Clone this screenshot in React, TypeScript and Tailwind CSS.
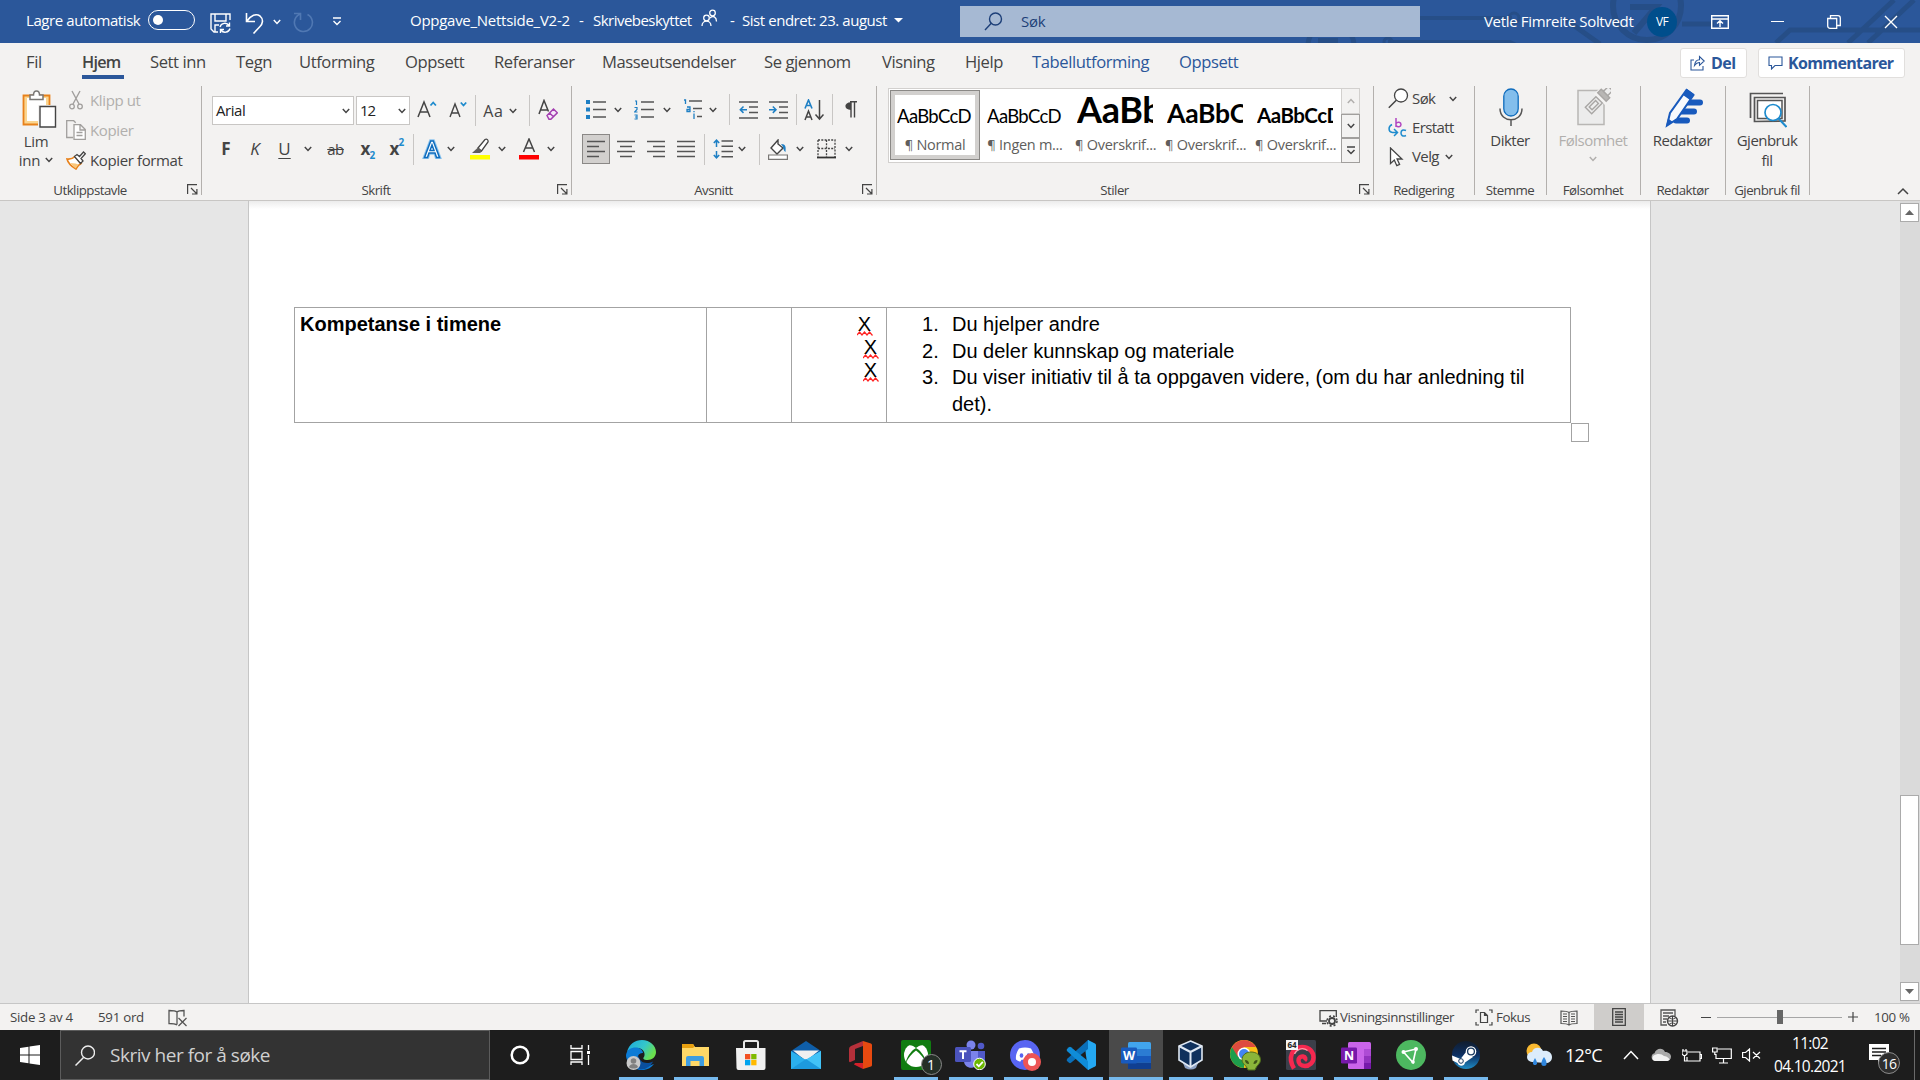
import React from "react";

type P = { children?: React.ReactNode; className?: string };

const Chev = ({ c = "#444444" }: { c?: string }) => (
  <svg width="8" height="6" viewBox="0 0 8 6" className="shrink-0" fill="none" stroke={c} strokeWidth="1.5">
    <path d="M.8 1 4 4.4 7.2 1" />
  </svg>
);

const Slot = ({ children, className = "" }: P) => (
  <div className={`flex shrink-0 items-center justify-center ${className}`}>{children}</div>
);

const Sep = ({ className = "" }: P) => <div className={`h-[31px] w-px shrink-0 bg-[#c8c6c4] ${className}`} />;

const Svg = ({ w, h, children, className = "", vb }: { w: number; h: number; vb?: string } & P) => (
  <svg width={w} height={h} viewBox={vb ?? `0 0 ${w} ${h}`} className={`shrink-0 ${className}`} fill="none">
    {children}
  </svg>
);

const Launcher = () => (
  <Svg w={11} h={11} className="absolute right-[4px] bottom-[5px]">
    <path d="M.6 10V.6H10M4 4l5.500 5.500M9.900 5v5H5" stroke="#444" strokeWidth="1.2" />
  </Svg>
);

const Group = ({ label, className = "", launcher, children }: P & { label: string; launcher?: boolean }) => (
  <div className={`relative flex h-full shrink-0 flex-col ${className}`}>
    <div className="h-[99px]">{children}</div>
    <div className={`text-center text-[13.3px] leading-[19px] tracking-[-0.04em] whitespace-nowrap ${launcher ? "pr-[22px]" : "pr-[2px]"}`}>{label}</div>
    {launcher && <Launcher />}
    <div className="absolute top-[4px] right-0 h-[109px] w-px bg-[#b3b0ad]" />
  </div>
);

/* ---------- title bar ---------- */

const Circuit = () => (
  <svg className="absolute top-0 right-0" width="640" height="43" viewBox="1280 0 640 43" fill="none" stroke="#264e87">
    <path d="M1308 46a22 22 0 0 1 46 0" strokeWidth="5" />
    <path d="M1318 38h20v5h-20z" fill="#264e87" stroke="none" />
    <path d="M1388 42h122l8 4M1420 18h92" strokeWidth="4" />
    <circle cx="1388" cy="42" r="4" strokeWidth="3" />
    <circle cx="1514" cy="18" r="5" strokeWidth="3" />
    <circle cx="1647" cy="6" r="34" strokeWidth="6" />
    <path d="M1630 7h26l-22 26M1656 7v24" strokeWidth="6" />
    <path d="M1566 20l34 24M1682 24h32" strokeWidth="5" />
    <path d="M1776 43l14-13h130M1848 43l46-43M1868 43l46-43" strokeWidth="5" />
  </svg>
);

const TitleBar = () => (
  <header className="relative flex h-[43px] shrink-0 items-center overflow-hidden bg-[#2b579a] text-[15px] tracking-[-0.04em] whitespace-nowrap text-white">
    <Circuit />
    <div className="relative flex h-full w-[385px] items-center">
      <span className="ml-[26px] w-[122px] pb-[2px] tracking-[-0.028em]">Lagre automatisk</span>
      <div className="mb-[3px] flex h-[20px] w-[47px] items-center rounded-full border-[1.5px] border-white pl-[4px]">
        <div className="size-[10px] rounded-full bg-white" />
      </div>
      <Slot className="ml-[14px] w-[22px] pt-[3px]">
        <Svg w={21} h={21}>
          <path d="M20 7V1H1v15l3 3h4M5 1v7h11V1M5 19v-7h4" stroke="#fff" strokeWidth="1.4" />
          <path d="M10 14a5 5 0 0 1 9-1.500M19.500 9.500v3.500H16M20 15.500a5 5 0 0 1-9 1.500M10.500 20v-3.500H14" stroke="#fff" strokeWidth="1.4" />
        </Svg>
      </Slot>
      <Slot className="ml-[13px] w-[22px] pt-[2px]">
        <Svg w={20} h={22}>
          <path d="M1.500 1v8.500H10M2 9C6 3.500 11 1 15 4c4 3.500 2.500 8 0 10.500L8.500 21.500" stroke="#fff" strokeWidth="1.6" />
        </Svg>
      </Slot>
      <Slot className="ml-[6px] w-[10px]"><Chev c="#fff" /></Slot>
      <Slot className="ml-[10px] w-[22px] pt-[1px]">
        <Svg w={21} h={21}>
          <path d="M1 1.500h6.500V8M7.500 2A9 9 0 1 0 14.500 2.500" stroke="#5078b3" strokeWidth="1.6" />
        </Svg>
      </Slot>
      <Slot className="ml-[17px] w-[12px]">
        <Svg w={10} h={9}>
          <path d="M1 1h8M1.500 4 5 7.500 8.500 4" stroke="#fff" strokeWidth="1.4" />
        </Svg>
      </Slot>
    </div>
    <div className="relative flex h-full w-[575px] items-center pb-[2px]">
      <span className="ml-[25px] w-[169px] tracking-[-0.018em]">Oppgave_Nettside_V2-2</span>
      <span className="w-[14px]">-</span>
      <span className="w-[108px] tracking-[-0.035em]">Skrivebeskyttet</span>
      <Svg w={17} h={18} className="mb-[6px]">
        <g stroke="#fff" strokeWidth="1.3">
          <circle cx="5.500" cy="9" r="2.800" />
          <path d="M1 17c0-6.500 9-6.500 9 0" />
          <circle cx="11.500" cy="4" r="2.800" />
          <path d="M9 9c3-3 6.500-1 6.500 3.500" />
        </g>
      </Svg>
      <span className="ml-[12px] w-[12px]">-</span>
      <span className="w-[151px] tracking-[-0.03em]">Sist endret: 23. august</span>
      <Svg w={9} h={5} className="ml-px"><path d="M0 0h9L4.500 4.500z" fill="#fff" /></Svg>
    </div>
    <div className="relative mb-px flex h-[31px] w-[460px] items-center bg-[#a6b9d3] text-[#1d3f78]">
      <Svg w={19} h={19} className="ml-[24px]">
        <circle cx="11.500" cy="7" r="6" stroke="#1d3f78" strokeWidth="1.4" />
        <path d="M7.500 11 1 18" stroke="#1d3f78" strokeWidth="1.4" />
      </Svg>
      <span className="ml-[18px] tracking-[-0.02em]">Søk</span>
    </div>
    <div className="relative flex h-full flex-1 items-center">
      <span className="ml-[64px] w-[163px] tracking-[-0.022em]">Vetle Fimreite Soltvedt</span>
      <div className="flex size-[30px] items-center justify-center rounded-full bg-[#004e8c] text-[12px]">VF</div>
      <Svg w={18} h={14} className="ml-[34px]">
        <path d="M.7.700h16.600v12.600H.7zM.7 4h16.600M9 12V6M6 8.500 9 5.700l3 2.800" stroke="#fff" strokeWidth="1.400" />
      </Svg>
      <div className="ml-[42px] h-[1.500px] w-[13px] bg-white" />
      <Svg w={14} h={14} className="ml-[43px]">
        <path d="M.7 3.500h9v9.800H3a2.300 2.300 0 0 1-2.300-2.300zM3.500 3.500V.700H11A2.300 2.300 0 0 1 13.300 3v7.500H10" stroke="#fff" strokeWidth="1.300" />
      </Svg>
      <Svg w={14} h={14} className="ml-[43px]"><path d="m1 1 12 12M13 1 1 13" stroke="#fff" strokeWidth="1.400" /></Svg>
    </div>
  </header>
);

/* ---------- tabs ---------- */

const tabs: [string, string][] = [
  ["Sett inn", "w-[86px]"],
  ["Tegn", "w-[63px]"],
  ["Utforming", "w-[106px]"],
  ["Oppsett", "w-[89px]"],
  ["Referanser", "w-[108px]"],
  ["Masseutsendelser", "w-[162px]"],
  ["Se gjennom", "w-[118px]"],
  ["Visning", "w-[83px]"],
  ["Hjelp", "w-[67px]"],
];

const Tabs = () => (
  <nav className="flex h-[39px] shrink-0 items-center pl-[26px] text-[16.600px] tracking-[-0.025em] whitespace-nowrap">
    <span className="w-[56px]">Fil</span>
    <div className="w-[68px]">
      <div className="flex h-[39px] w-[42px] flex-col">
        <span className="h-[32px] pt-[7px] text-[16.200px] leading-[25px] font-semibold tracking-[-0.045em]">Hjem</span>
        <div className="h-[4px] bg-[#2b579a]" />
      </div>
    </div>
    {tabs.map(([t, w]) => (
      <span key={t} className={w}>{t}</span>
    ))}
    <span className="w-[147px] text-[#2b579a]">Tabellutforming</span>
    <span className="text-[#2b579a]">Oppsett</span>
    <div className="mr-[15px] ml-auto flex gap-[11px] font-bold text-[#2b579a]">
      <div className="flex h-[30px] w-[67px] items-center rounded-[3px] border border-[#e1dfdd] bg-white pl-[9px]">
        <Svg w={15} h={16}>
          <path d="M4 5H1v10h12v-4M4.500 10.500C5 6.500 7 4.700 9.500 4.700V1.500l4.700 4.500-4.700 4.300V7.500C7.500 7.300 6 8.500 4.500 10.500z" stroke="#2b579a" strokeWidth="1.100" />
        </Svg>
        <span className="ml-[6px] text-[16px] tracking-[-0.035em]">Del</span>
      </div>
      <div className="flex h-[30px] w-[147px] items-center rounded-[3px] border border-[#e1dfdd] bg-white pl-[9px]">
        <Svg w={15} h={14}><path d="M1 1h13v8.500H7L3.500 13V9.500H1z" stroke="#2b579a" strokeWidth="1.100" /></Svg>
        <span className="ml-[5px] text-[16px] tracking-[-0.04em]">Kommentarer</span>
      </div>
    </div>
  </nav>
);

/* ---------- ribbon groups ---------- */

const Clipboard = () => (
  <Group label="Utklippstavle" className="w-[202px]" launcher>
    <div className="flex">
      <div className="flex w-[66px] flex-col items-center pt-[8px] pl-[6px] text-[15px] leading-[20px] tracking-[-0.02em]">
        <Svg w={35} h={38} className="ml-[6px]">
          <path d="M1.500 5.500h26v29h-26z" fill="#fbd58f" stroke="#e8811a" strokeWidth="1.800" />
          <path d="M5 8h19v23H5z" fill="#fff" />
          <path d="M8 9.500V5h3.500c0-5.500 6-5.500 6 0H21v4.500z" fill="#fff" stroke="#797775" strokeWidth="1.500" />
          <path d="M16 15h18v22H16z" fill="#f3f2f1" />
          <path d="M18 16.500h15.500V37H18z" fill="#fff" stroke="#444" strokeWidth="1.400" />
        </Svg>
        <span className="mt-[3px]">Lim</span>
        <span className="-mt-px flex items-center gap-[5px]">inn <Chev /></span>
      </div>
      <div className="flex flex-col pt-[3px] text-[15px] leading-[30px] tracking-[-0.025em] whitespace-nowrap">
        <div className="flex h-[30px] items-center text-[#b1afad]">
          <Slot className="mr-[4px] w-[20px]">
            <Svg w={14} h={20}>
              <path d="M3 1l7 13M11 1 4 14" stroke="#a19f9d" strokeWidth="1.400" />
              <circle cx="3" cy="16.500" r="2.300" stroke="#a19f9d" strokeWidth="1.300" />
              <circle cx="11" cy="16.500" r="2.300" stroke="#a19f9d" strokeWidth="1.300" />
            </Svg>
          </Slot>
          Klipp ut
        </div>
        <div className="flex h-[30px] items-center text-[#b1afad]">
          <Slot className="mr-[4px] w-[20px]">
            <Svg w={20} h={20}>
              <path d="M7 17.500H.7V.700h7l2 2" stroke="#a19f9d" strokeWidth="1.300" />
              <path d="M8 4.700h6.500l4.800 4.800v9.800H8zM14 5v5h5M10.500 12.500h6M10.500 15.500h6" fill="#fff" stroke="#a19f9d" strokeWidth="1.300" />
            </Svg>
          </Slot>
          Kopier
        </div>
        <div className="flex h-[30px] items-center">
          <Slot className="mr-[4px] w-[20px]">
            <Svg w={20} h={19}>
              <path d="M1 8c4 .5 6-.5 8-2.500l6 7c-2 1-4 3-5 5.500C5.500 15.500 2 12 1 8z" fill="#fff" stroke="#e8811a" strokeWidth="1.600" />
              <path d="M4 12l5.500 5.500 3-4-3-1z" fill="#f9c77c" />
              <path d="m8.500 5.500 2.500-2 2.500 2 4-4.500 1.800 1.800-4.300 4.700 2 2.500-2.500 2.500z" fill="#fff" stroke="#444" strokeWidth="1.300" />
            </Svg>
          </Slot>
          Kopier format
        </div>
      </div>
    </div>
  </Group>
);

const Font = () => (
  <Group label="Skrift" className="w-[370px]" launcher>
    <div className="flex h-[29px] items-center pl-[10px] mt-[14px]">
      <div className="flex h-[29px] w-[142px] items-center justify-between border border-[#c8c6c4] bg-white px-[3px] text-[15px] tracking-[-0.03em] text-[#222]">Arial<Chev /></div>
      <div className="ml-[2px] flex h-[29px] w-[54px] items-center justify-between border border-[#c8c6c4] bg-white px-[3px] text-[15px] tracking-[-0.08em] text-[#222]">12<Chev /></div>
      <Slot className="w-[33px]">
        <Svg w={20} h={20} className="mb-[4px]">
          <path d="M1 18 7 3l6 15M3 13h8" stroke="#444" strokeWidth="1.500" /><path d="m13.500 6.500 2.700-3 2.700 3" stroke="#1e8bcd" strokeWidth="1.800" />
        </Svg>
      </Slot>
      <Slot className="w-[29px]">
        <Svg w={18} h={20} className="mb-[4px]">
          <path d="M1 18 6 5l5 13M2.500 14h7" stroke="#444" strokeWidth="1.400" /><path d="m11.800 3.500 2.700 3 2.700-3" stroke="#1e8bcd" strokeWidth="1.800" />
        </Svg>
      </Slot>
      <Sep className="ml-[3px]" />
      <Slot className="ml-[4px] w-[27px] text-[16px] tracking-[0.05em]">Aa</Slot>
      <Slot className="w-[11px]"><Chev /></Slot>
      <Sep className="ml-[11px]" />
      <Slot className="ml-[8px] w-[20px]">
        <Svg w={20} h={21} className="mb-[2px]">
          <path d="M1 15 6 1.500l4.500 11M2.500 11h7" stroke="#444" strokeWidth="1.500" />
          <path d="m9 16.500 6.500-6.500 3.800 3.800-6.500 6.500H11zM11.500 14l4 3.800" fill="#f6e8fa" stroke="#a33fb0" strokeWidth="1.500" />
        </Svg>
      </Slot>
    </div>
    <div className="mt-[8px] flex h-[32px] items-center pl-[10px] text-[17px]">
      <Slot className="w-[28px] font-bold">F</Slot>
      <Slot className="w-[30px] italic">K</Slot>
      <Slot className="w-[29px] underline underline-offset-[3px]">U</Slot>
      <Slot className="w-[18px]"><Chev /></Slot>
      <Slot className="w-[37px]">
        <span className="px-px text-[15px] tracking-[-0.03em] line-through">ab</span>
      </Slot>
      <Slot className="w-[27px] font-bold tracking-[-0.04em]">x<span className="mt-[13px] text-[10px] text-[#1e8bcd]">2</span></Slot>
      <Slot className="w-[31px] font-bold tracking-[-0.04em]">x<span className="mb-[13px] text-[10px] text-[#1e8bcd]">2</span></Slot>
      <Sep className="ml-px" />
      <Slot className="ml-[8px] w-[20px]">
        <Svg w={20} h={20}>
          <path d="M2.500 18.500 8.700 2h2.600l6.200 16.500h-3L13 14H7l-1.500 4.500z" fill="#fff" stroke="#8ec5ee" strokeWidth="3.500" />
          <path d="M2.500 18.500 8.700 2h2.600l6.200 16.500h-3L13 14H7l-1.500 4.500zM8 11.500h4l-2-5.500z" fill="#fff" stroke="#0f6cbd" strokeWidth="1.500" />
        </Svg>
      </Slot>
      <Slot className="ml-[3px] w-[11px]"><Chev /></Slot>
      <Slot className="ml-[14px] w-[20px]">
        <Svg w={20} h={22}>
          <path d="M0 17h20v4.500H0z" fill="#ff0" />
          <path d="M8 10 15 1.500c2-1 3.500.5 3 2.500l-6.500 9z" fill="#fff" stroke="#444" strokeWidth="1.300" /><path d="m8 9.500 4 4-2 1.500H2z" fill="#605e5c" />
        </Svg>
      </Slot>
      <Slot className="ml-[7px] w-[10px]"><Chev /></Slot>
      <Slot className="ml-[12px] w-[20px]">
        <Svg w={20} h={22}>
          <path d="M0 17h20v4.500H0z" fill="red" /><path d="M4.500 14 10 1l5.500 13M6.500 10h7" stroke="#444" strokeWidth="1.500" />
        </Svg>
      </Slot>
      <Slot className="ml-[7px] w-[10px]"><Chev /></Slot>
    </div>
  </Group>
);

const Lines = ({ rows }: { rows: [number, number][] }) => (
  <Svg w={18} h={18}>
    {rows.map(([a, b], i) => (
      <path key={i} d={`M${a} ${1.5 + i * 5}H${b}`} stroke="#555" strokeWidth="1.5" />
    ))}
  </Svg>
);

const Paragraph = () => (
  <Group label="Avsnitt" className="w-[305px]" launcher>
    <div className="mt-[12px] flex h-[31px] items-center pl-[14px]">
      <Slot className="w-[20px]">
        <Svg w={20} h={20}>
          <path d="M0 0h4v4H0zM0 7.500h4v4H0zM0 15h4v4H0z" fill="#1e7fc4" /><path d="M7 2h13M7 9.500h13M7 17h13" stroke="#555" strokeWidth="1.500" />
        </Svg>
      </Slot>
      <Slot className="ml-[7px] w-[10px]"><Chev /></Slot>
      <Slot className="ml-[11px] w-[20px]">
        <Svg w={20} h={20}>
          <path d="M7 2h13M7 9.500h13M7 17h13" stroke="#555" strokeWidth="1.500" />
          <path d="M1 1h1.500v4M.5 7.500h2.500v2L.5 12h3M.5 15h2.500v4H.5M1 17h2" stroke="#1e7fc4" strokeWidth="1.200" />
        </Svg>
      </Slot>
      <Slot className="ml-[8px] w-[10px]"><Chev /></Slot>
      <Slot className="ml-[11px] w-[20px]">
        <Svg w={20} h={21}>
          <path d="M6 2h13M10 9.500h9M14 17.500h5" stroke="#555" strokeWidth="1.500" />
          <path d="M1 1h1.500v4M4 8h3v4.500H4v-2h3M11 14.500V20M11 12v1.300" stroke="#1e7fc4" strokeWidth="1.300" />
        </Svg>
      </Slot>
      <Slot className="ml-[5px] w-[10px]"><Chev /></Slot>
      <Sep className="ml-[11px]" />
      <Slot className="ml-[8px] w-[20px]">
        <Svg w={19} h={20}>
          <path d="M0 2h19M10 7h9M10 12.500h9M0 18h19" stroke="#555" strokeWidth="1.500" /><path d="M8 9.700H1.500M4.500 6.500 1.300 9.700l3.200 3.200" stroke="#1e7fc4" strokeWidth="1.500" />
        </Svg>
      </Slot>
      <Slot className="ml-[10px] w-[20px]">
        <Svg w={19} h={20}>
          <path d="M0 2h19M10 7h9M10 12.500h9M0 18h19" stroke="#555" strokeWidth="1.500" /><path d="M0 9.700h6.500M3.800 6.500 7 9.700l-3.200 3.200" stroke="#1e7fc4" strokeWidth="1.500" />
        </Svg>
      </Slot>
      <Sep className="ml-[8px]" />
      <Slot className="ml-[7px] w-[20px]">
        <Svg w={20} h={22}>
          <path d="M1 9.500 4.500 1 8 9.500M2.300 6.500h4.400" stroke="#1e7fc4" strokeWidth="1.600" />
          <path d="M1 21l3.500-9L8 21M2.300 18h4.400M15.500 1v19M11.500 15.500l4 4.500 4-4.500" stroke="#444" strokeWidth="1.500" />
        </Svg>
      </Slot>
      <Sep className="ml-[8px]" />
      <Slot className="ml-[12px] w-[12px]">
        <Svg w={12} h={17}>
          <path d="M6 1.200C-1.500 1.200-1.500 9 6 9z" fill="#444" /><path d="M5 .8h7M6 1v15.500M9.500 1v15.500" stroke="#444" strokeWidth="1.400" />
        </Svg>
      </Slot>
    </div>
    <div className="mt-[8px] flex h-[32px] items-center pl-[10px]">
      <Slot className="h-[30px] w-[28px] border border-[#8a8886] bg-[#d2d0ce]"><Lines rows={[[0, 18], [0, 12], [0, 18], [0, 12]]} /></Slot>
      <Slot className="ml-[6px] w-[20px]"><Lines rows={[[0, 18], [3, 15], [0, 18], [3, 15]]} /></Slot>
      <Slot className="ml-[10px] w-[20px]"><Lines rows={[[0, 18], [6, 18], [0, 18], [6, 18]]} /></Slot>
      <Slot className="ml-[10px] w-[20px]"><Lines rows={[[0, 18], [0, 18], [0, 18], [0, 18]]} /></Slot>
      <Sep className="ml-[8px]" />
      <Slot className="ml-[8px] w-[20px]">
        <Svg w={20} h={20}>
          <path d="M8.500 2h11.500M8.500 7.200h11.500M8.500 12.500h11.500M8.500 17.700h11.500" stroke="#555" strokeWidth="1.500" />
          <path d="M3.500 1v7M.8 4 3.500 1.200 6.200 4M3.500 12v7M.8 16l2.700 2.800L6.200 16" stroke="#1e7fc4" strokeWidth="1.500" />
        </Svg>
      </Slot>
      <Slot className="ml-[4px] w-[10px]"><Chev /></Slot>
      <Sep className="ml-[12px]" />
      <Slot className="ml-[8px] w-[20px]">
        <Svg w={20} h={21}>
          <path d="m3 9 7-8v4l5 4-6 6z" fill="#fff" stroke="#444" strokeWidth="1.400" /><path d="M13 5c5 0 5 3 4.500 8-2-1-2-4-3-6z" fill="#1e7fc4" />
          <path d="M.6 16h18.800v4.400H.6z" fill="#fff" stroke="#797775" strokeWidth="1.200" />
        </Svg>
      </Slot>
      <Slot className="ml-[7px] w-[10px]"><Chev /></Slot>
      <Slot className="ml-[11px] w-[20px]">
        <Svg w={19} h={20}>
          <path d="M1 1h17v17M1 1v17M9.500 1v17M1 9.500h17" stroke="#444" strokeWidth="1.300" strokeDasharray="2 1.300" /><path d="M0 18.500h19" stroke="#333" strokeWidth="1.800" />
        </Svg>
      </Slot>
      <Slot className="ml-[8px] w-[10px]"><Chev /></Slot>
    </div>
  </Group>
);

const styles: [string, string, string][] = [
  ["AaBbCcD", "Normal", "text-[18.500px] tracking-[-0.035em]"],
  ["AaBbCcD", "Ingen m...", "text-[18.500px] tracking-[-0.035em]"],
  ["AaBbCcD", "Overskrif...", "text-[36px] font-bold tracking-[-0.01em]"],
  ["AaBbCcD", "Overskrif...", "text-[26.500px] font-bold tracking-[-0.01em]"],
  ["AaBbCcD", "Overskrif...", "text-[20.500px] font-bold tracking-[-0.025em]"],
];

const Styles = () => (
  <Group label="Stiler" className="w-[497px]" launcher>
    <div className="flex pt-[6px] pl-[11px]">
      <div className="flex h-[75px] w-[454px] border border-[#d2d0ce] bg-white p-px">
        {styles.map(([a, b, c], i) => (
          <div key={i} className={`h-[70px] w-[90px] overflow-hidden ${i === 0 ? "border border-[#8a8886] p-[4px] shadow-[inset_0_0_0_4px_#d2d0ce]" : "p-[5px]"}`}>
            <div className="ml-[2px] flex h-[39px] w-[76px] items-baseline overflow-hidden font-[Lato] text-black">
              <span className="inline-block h-[28px] w-0" />
              <span className={`leading-[0] whitespace-nowrap ${c}`}>{a}</span>
            </div>
            <div className="text-center text-[14.500px] leading-[22px] tracking-[-0.02em] whitespace-nowrap text-[#605e5c]">
              <span className="text-[13px]">¶</span> {b}
            </div>
          </div>
        ))}
      </div>
      <div className="-ml-px flex h-[75px] w-[19px] flex-col">
        <Slot className="h-[26px] border border-[#d2d0ce]"><div className="rotate-180"><Chev c="#b1afad" /></div></Slot>
        <Slot className="h-[24px] border border-[#a19f9d]"><Chev /></Slot>
        <Slot className="h-[25px] border border-[#a19f9d]">
          <Svg w={10} h={9}><path d="M1 1h8M1.500 4 5 7.500 8.500 4" stroke="#444" strokeWidth="1.500" /></Svg>
        </Slot>
      </div>
    </div>
  </Group>
);

const Editing = () => (
  <Group label="Redigering" className="w-[101px]">
    <div className="flex flex-col pt-[2px] pl-[14px] text-[15px] tracking-[-0.04em]">
      <div className="flex h-[29px] items-center">
        <Svg w={21} h={21}>
          <circle cx="13" cy="7.500" r="6.500" stroke="#444" strokeWidth="1.300" fill="#fff" /><path d="m8.300 12.300-7.500 7.500" stroke="#444" strokeWidth="1.500" />
        </Svg>
        <span className="ml-[3px] w-[37px]">Søk</span><Chev />
      </div>
      <div className="flex h-[29px] items-center">
        <Svg w={19} h={21}>
          <path d="M8 1v9M8 6.500c1.500-2 5-1.500 5 1s-3.500 3-5 1" stroke="#b146c2" strokeWidth="1.500" />
          <path d="M4 7.500C0 9.500 0 15 4.500 15.500H9M6 12l3.500 3.500L6 19M18 13.500c-3-1.500-5 0-5 2.500s2 4 5 2.500" stroke="#1e8bcd" strokeWidth="1.500" />
        </Svg>
        <span className="ml-[5px]">Erstatt</span>
      </div>
      <div className="flex h-[29px] items-center">
        <Svg w={19} h={20}>
          <path d="M2.500 1v15.500l3.800-3.500 2.500 5.700 2.800-1.300-2.500-5.400H14z" fill="#fff" stroke="#444" strokeWidth="1.300" />
        </Svg>
        <span className="ml-[5px] w-[33px]">Velg</span><Chev />
      </div>
    </div>
  </Group>
);

const Big = ({ label, w, text, children, dim }: P & { label: string; w: string; text: React.ReactNode; dim?: boolean }) => (
  <Group label={label} className={w}>
    <div className={`flex flex-col items-center pt-[6px] pr-[2px] text-[15px] leading-[20px] tracking-[-0.035em] ${dim ? "text-[#b1afad]" : ""}`}>
      <Slot className="h-[39px] pl-[2px]">{children}</Slot>
      <div className="mt-[3px] flex flex-col items-center whitespace-nowrap">{text}</div>
    </div>
  </Group>
);

const Ribbon = () => (
  <section className="relative flex h-[119px] shrink-0 border-b border-[#c8c6c4]">
    <Clipboard />
    <Font />
    <Paragraph />
    <Styles />
    <Editing />
    <Big label="Stemme" w="w-[72px]" text="Dikter">
      <Svg w={24} h={39}>
        <rect x="4.800" y="1" width="14.400" height="27" rx="7.200" fill="#83beec" stroke="#0f6cbd" strokeWidth="1.300" /><path d="M1 20.500c0 15 22 15 22 0M12 31.500V38" stroke="#555" strokeWidth="1.500" />
      </Svg>
    </Big>
    <Big label="Følsomhet" w="w-[94px]" dim text={<>Følsomhet<span className="flex h-[18px] items-center"><Chev c="#b1afad" /></span></>}>
      <Svg w={34} h={39}>
        <path d="M1 2.500h26v34H1z" fill="#ececec" stroke="#b8b6b4" strokeWidth="1.500" />
        <path d="m17 6 5-5 11 11-5 5z" fill="#f3f2f1" />
        <g transform="rotate(45 20 14)" stroke="#a8a6a4" fill="#ededed" strokeWidth="1.400">
          <path d="M17-5h6v7h-6z" /><path d="M14 2h12v5H14z" fill="#b8b6b4" /><path d="M15.500 11h9v15h-9zM18 14h4v9h-4z" />
        </g>
      </Svg>
    </Big>
    <Big label="Redaktør" w="w-[85px]" text="Redaktør">
      <Svg w={40} h={40}>
        <path d="M20 14.500h16M17 23.500h13M12 32.500h11" stroke="#185abd" strokeWidth="6" strokeLinecap="round" />
        <path d="M3 37.500 6 25 22.500 2l7 5-16.500 24z" fill="#f8fafd" stroke="#185abd" strokeWidth="2" /><path d="m19 7 4-6 7 5-4 6zM2 38.500l2-8 5 3.500z" fill="#185abd" />
      </Svg>
    </Big>
    <Big label="Gjenbruk fil" w="w-[84px]" text={<><span>Gjenbruk</span><span>fil</span></>}>
      <Svg w={38} h={36} className="mt-[5px]">
        <path d="M1.500 26V1.500H34M5.500 29.500v-24H36v23.500z" stroke="#555" strokeWidth="1.700" /><path d="M8.500 8.500h24.500v18H8.500z" fill="#fff" stroke="#555" strokeWidth="1.500" />
        <circle cx="24" cy="20.500" r="8" fill="#fff" stroke="#1e8bcd" strokeWidth="1.700" /><path d="m29.500 26.500 8 8.500" stroke="#1e8bcd" strokeWidth="2" />
      </Svg>
    </Big>
    <div className="ml-auto flex items-end pr-[11px] pb-[5px]">
      <Svg w={12} h={8}><path d="M1 7 6 2l5 5" stroke="#444" strokeWidth="1.500" /></Svg>
    </div>
  </section>
);

/* ---------- document ---------- */

const X = ({ className = "" }: P) => (
  <div className={`relative h-[23px] w-[15px] text-center ${className}`}>
    X
    <svg className="absolute top-[18px] left-0" width="16" height="5" viewBox="0 0 16 5" fill="none" stroke="#f22" strokeWidth="1.2">
      <path d="M0 4 2.500 1 5 4l2.500-3L10 4l2.500-3L15.500 4.500" />
    </svg>
  </div>
);

const goals = [
  "Du hjelper andre",
  "Du deler kunnskap og materiale",
  "Du viser initiativ til å ta oppgaven videre, (om du har anledning til det).",
];

const Document = () => (
  <main className="flex h-[802px] shrink-0 bg-[#e6e6e6]">
    <div className="relative ml-[248px] w-[1403px] border-x border-[#c6c6c6] bg-white pt-[106px] pl-[45px] font-['Liberation_Sans',sans-serif] text-[20px] leading-[23px] text-black">
      <div className="relative w-[1277px]">
        <div className="grid h-[116px] w-full grid-cols-[412px_85px_95px_1fr] divide-x divide-[#a3a3a3] border border-[#a3a3a3]">
          <div className="pt-[5px] pl-[5px] font-bold">Kompetanse i timene</div>
          <div />
          <div className="pt-[5px]">
            <X className="ml-[65px]" />
            <X className="ml-[71px]" />
            <X className="ml-[71px]" />
          </div>
          <ol className="pt-[3px] leading-[26.600px]">
            {goals.map((t, i) => (
              <li key={t} className="flex pl-[35px]">
                <span className="w-[30px] shrink-0">{i + 1}.</span>
                <span className="w-[590px]">{t}</span>
              </li>
            ))}
          </ol>
        </div>
        <div className="absolute top-[116px] left-[1277px] h-[19px] w-[18px] border border-[#a3a3a3] bg-white" />
      </div>
      <div className="absolute top-0 left-0 h-[8px] w-full bg-linear-to-b from-[#ececec] to-white" />
    </div>
    <div className="ml-auto flex w-[20px] flex-col bg-[#dadada] pt-[2px] pb-[2px]">
      <Slot className="h-[19px] w-[19px] border border-[#ababab] bg-white"><Svg w={9} h={5}><path d="M0 5 4.500 0 9 5z" fill="#666" /></Svg></Slot>
      <div className="mt-[573px] h-[150px] w-[19px] border border-[#ababab] bg-white" />
      <Slot className="mt-auto h-[19px] w-[19px] border border-[#ababab] bg-white"><Svg w={9} h={5}><path d="M0 0h9L4.500 5z" fill="#666" /></Svg></Slot>
    </div>
  </main>
);

/* ---------- status bar ---------- */

const StatusBar = () => (
  <footer className="flex h-[27px] shrink-0 items-center border-t border-[#c6c6c6] pt-px text-[13.300px] tracking-[-0.02em] whitespace-nowrap text-[#444]">
    <span className="ml-[10px] w-[88px]">Side 3 av 4</span>
    <span className="w-[70px]">591 ord</span>
    <Svg w={19} h={18}>
      <path d="M9 3v12.500M9 3C7.500 1.500 3.500 1.500 1 1.500v13c3 0 6 0 8 1.500M9 3c1.500-1.500 4-1.500 7-1.500v6M10.500 9l8 8M18.500 9l-8 8" stroke="#555" strokeWidth="1.300" />
    </Svg>
    <div className="ml-auto flex h-full items-center">
      <Svg w={19} h={18}>
        <path d="M17.300 8V1.700H1V12h7M3 14.500h4" stroke="#444" strokeWidth="1.300" /><circle cx="13" cy="12" r="3" stroke="#444" strokeWidth="1.800" />
        <circle cx="13" cy="12" r="5" stroke="#444" strokeWidth="1.500" strokeDasharray="2 2" />
      </Svg>
      <span className="ml-[2px] w-[135px] tracking-[-0.033em]">Visningsinnstillinger</span>
      <Svg w={18} h={17}>
        <path d="M4 1H1v3M14 1h3v3M4 16H1v-3M14 16h3v-3M5.500 3.500h4l3 3v7h-7zM9.500 3.500v3h3" stroke="#444" strokeWidth="1.200" />
      </Svg>
      <span className="ml-[3px] w-[64px] tracking-[-0.035em]">Fokus</span>
      <Svg w={18} h={16}>
        <path d="M9 2.500v12M9 2.500C7 1 4 1 1 1v12.500c3 0 6 0 8 1.500 2-1.500 5-1.500 8-1.500V1c-3 0-6 0-8 1.500M3 4h4M3 6.500h4M3 9h4M3 11.500h4M11 4h4M11 6.500h4M11 9h4M11 11.500h4" stroke="#555" strokeWidth="1.200" />
      </Svg>
      <Slot className="-mt-px ml-[16px] h-[26px] w-[50px] bg-[#cfcdcb]">
        <Svg w={14} h={18}><path d="M.7.700h12.600v16.600H.7zM3 4h8M3 6.500h8M3 9h8M3 11.500h8M3 14h8" stroke="#444" strokeWidth="1.300" /></Svg>
      </Slot>
      <Svg w={19} h={18} className="ml-[16px]">
        <path d="M7 16H1V1h14v6M3 4h10M3 7h6M3 10h4M3 13h3" stroke="#555" strokeWidth="1.300" /><circle cx="12.500" cy="12" r="5" fill="#f3f2f1" stroke="#444" strokeWidth="1.400" />
        <path d="M12.500 7v10M7.500 12h10M9 8.500c3 2 4 2 7 0M9 15.500c3-2 4-2 7 0" stroke="#444" />
      </Svg>
      <div className="-mt-px ml-[22px] h-px w-[10px] bg-[#444]" />
      <div className="-mt-px ml-[6px] flex h-[14px] w-[125px] items-center justify-center bg-[linear-gradient(#a6a6a6,#a6a6a6)] bg-[length:100%_1px] bg-center bg-no-repeat">
        <div className="h-[14px] w-[6px] bg-[#666]" />
      </div>
      <Svg w={10} h={10} className="-mt-px ml-[6px]"><path d="M0 5h10M5 0v10" stroke="#444" strokeWidth="1.200" /></Svg>
      <span className="ml-[16px] w-[46px] tracking-[-0.025em]">100 %</span>
    </div>
  </footer>
);

/* ---------- task bar ---------- */

const Edge = () => (
  <Svg w={30} h={30}>
    <defs>
      <linearGradient id="eg" x1="0" y1="0" x2="1" y2=".5"><stop stopColor="#1ba7e0" /><stop offset=".6" stopColor="#35c7c9" /><stop offset="1" stopColor="#6be04c" /></linearGradient>
    </defs>
    <path d="M1 12C3 4 9 0 16 0c8 0 14 6 14 12 0 5-4 8-8.500 8-4 0-5-1.500-3.500-3C20 13 17 8 11 8 6 8 3 10 1 12z" fill="url(#eg)" />
    <path d="M0 15C1 9 6 7 11 7.500c3 .5 6 3 6 5.500-6-1-8 8 0 12 5 2 8 0 11-1-5 7-15 8-21 3-5-4-7-8-7-12z" fill="#0c7bd6" />
    <path d="M13 16c0 6 7 9 14 5.500C25 26 20 30 14 29.500c-5-3-5-9-1-13.500z" fill="#0a4f9e" />
    <circle cx="7.500" cy="23" r="7" fill="#c9c9c9" /><circle cx="7.500" cy="21" r="2.800" fill="#808080" /><path d="M3 27c1-4 8-4 9 0-2 2-7 2-9 0z" fill="#808080" />
  </Svg>
);
const Folder = () => (
  <Svg w={27} h={24}>
    <path d="M0 1h11l2 3h14v19H0z" fill="#ffd867" /><path d="M0 1h11l1.500 2.500L11 5H0z" fill="#e8a010" />
    <path d="M4 23V15a2 2 0 0 1 2-2h14a2 2 0 0 1 2 2v8h-4.500v-5h-9v5z" fill="#3f9de0" />
  </Svg>
);
const Store = () => (
  <Svg w={30} h={30}>
    <path d="M8 9V2.500Q8 1 9.500 1h11Q22 1 22 2.500V9" stroke="#e8e8e8" strokeWidth="2" /><path d="M0 8h29.500v20a2 2 0 0 1-2 2h-25a2 2 0 0 1-2-2z" fill="#f1f1f1" />
    <path d="M9 14h5.300v5.300H9z" fill="#f25022" /><path d="M15.200 14h5.300v5.300h-5.300z" fill="#7fba00" />
    <path d="M9 20h5.300v5.300H9z" fill="#00a4ef" /><path d="M15.200 20h5.300v5.300h-5.300z" fill="#ffb900" />
  </Svg>
);
const Mail = () => (
  <Svg w={30} h={28}>
    <path d="M0 10 15 0l15 10v6H0z" fill="#0f5ea8" /><path d="M2 9.500h26L15 20z" fill="#f0f0f0" /><path d="M0 10l15 9 15-9v18H0z" fill="#2bb0ee" /><path d="M0 28 15 18.500l15-8.500v18z" fill="#42c3f7" /><path d="M0 28 15 18l15 10z" fill="#1d9ade" />
  </Svg>
);
const Office = () => (
  <Svg w={23} h={28}>
    <path d="M14 0 2 5Q0 6 0 8v12q0 1.500 1.500 1L6 19V8l8-3z" fill="#b5303a" /><path d="m14 0 8 2.500q1 .5 1 1.500v20q0 1-1 1.500L14 28z" fill="#e84a10" /><path d="M6 22h8v6L5 23.500z" fill="#d4202a" />
  </Svg>
);
const Xbox = () => (
  <div className="relative">
    <Svg w={30} h={30}>
      <rect width="30" height="30" rx="2" fill="#107c10" /><circle cx="15" cy="15" r="12" fill="#fff" />
      <path d="M7 5.500c3-1 5.500.5 8 2.500 2.500-2 5-3.500 8-2.500-2-2.500-5-3.500-8-3.500s-6 1-8 3.500zM12 10c-4 4-7 9-7 13 2-5 6-9.500 10-12.500C19 13.500 23 18 25 23c0-4-3-9-7-13l-3-2z" fill="#107c10" />
    </Svg>
    <div className="absolute top-[14px] left-[20px] flex size-[21px] items-center justify-center rounded-full border border-[#8a8a8a] bg-[#252f27] text-[14px] text-white">1</div>
  </div>
);
const Teams = () => (
  <Svg w={31} h={30}>
    <circle cx="16" cy="5" r="4.500" fill="#7b83eb" /><circle cx="26" cy="6" r="3.300" fill="#5059c9" />
    <path d="M20 11h10v9c0 5-8 6-10 2z" fill="#5059c9" /><path d="M9 11h14v10c0 9-14 9-14 0z" fill="#7b83eb" />
    <rect y="7" width="16" height="15" rx="1.500" fill="#4b53bc" /><path d="M4.500 11.200h7M8 11v8" stroke="#fff" strokeWidth="2" />
    <circle cx="24.500" cy="24" r="5.800" fill="#6bb700" stroke="#fff" /><path d="m21.500 24 2.300 2.300 4-4.500" stroke="#fff" strokeWidth="1.800" />
  </Svg>
);
const Discord = () => (
  <Svg w={31} h={31}>
    <circle cx="15" cy="15" r="15" fill="#5865f2" />
    <path d="M9 8.500c4-1.500 8-1.500 12 0 2.500 4 3.500 7 3 11-2 1.500-3 2-4.500 2l-1-1.700h-7L10.500 21.500c-1.500 0-2.500-.5-4.500-2-.5-4 .5-7 3-11z" fill="#fff" />
    <ellipse cx="11.500" cy="15.500" rx="1.800" ry="2.200" fill="#5865f2" /><ellipse cx="18.500" cy="15.500" rx="1.800" ry="2.200" fill="#5865f2" />
    <circle cx="22" cy="22" r="9" fill="#ed5555" /><circle cx="22" cy="22" r="4" fill="#fff" />
  </Svg>
);
const Code = () => (
  <Svg w={30} h={30}>
    <path d="M22 0 29 3.500q1 .5 1 1.500v20q0 1-1 1.500L22 30 19 8z" fill="#24a8f2" /><path d="M22 0 1.500 18.500Q0 20 1 21l2 1.800q1 .7 2 0L22 9z" fill="#0a6fb8" /><path d="M22 30 1.500 11.500Q0 10 1 9l2-1.800q1-.7 2 0L22 21z" fill="#0f8cd8" /><path d="M22 0v30l1.500-1V1z" fill="#24a8f2" />
  </Svg>
);
const Tile = ({ letter, base, dark, cols }: { letter: string; base: string; dark: string; cols: string[] }) => (
  <Svg w={30} h={27}>
    <rect x="7" y="0" width="23" height="27" rx="1.500" fill={cols[0]} />
    {letter === "W" ? (
      <><path d="M7 7h23v7H7z" fill={cols[1]} /><path d="M7 14h23v6.500H7z" fill={cols[2]} /><path d="M7 20.500h23V27H7z" fill={dark} /></>
    ) : (
      <><path d="M23 7h7v7h-7z" fill={cols[1]} /><path d="M23 14h7v6.500h-7z" fill={cols[2]} /><path d="M23 20.500h7V27h-7z" fill={dark} /></>
    )}
    <rect y="5.500" width="16" height="16" rx="1.300" fill={base} />
    <text x="8" y="18.200" textAnchor="middle" fontSize="12.500" fontWeight="700" fill="#fff" fontFamily="Open Sans">{letter}</text>
  </Svg>
);
const VBox = () => (
  <Svg w={25} h={30}>
    <path d="M5 23h15l-2 5q-5 3-11 0z" fill="#8ea2c4" /><path d="M12.500 1 24 6v14l-11.500 7L1 20V6z" fill="#10315d" stroke="#dfe8f3" strokeWidth="1.600" /><path d="M1 6l11.500 6L24 6M12.500 12v15" stroke="#dfe8f3" strokeWidth="2" />
  </Svg>
);
const Chrome = () => (
  <Svg w={31} h={31}>
    <circle cx="14" cy="14" r="14" fill="#fbc116" /><path d="M14 14 1.900 7A14 14 0 0 0 14 28z" fill="#1e9e4c" /><path d="M14 7h12.100A14 14 0 0 0 1.900 7L8 17z" fill="#de4b3e" />
    <circle cx="14" cy="14" r="6.500" fill="#fff" /><circle cx="14" cy="14" r="5" fill="#4285f4" />
    <path d="M21 12c5.500 0 9.500 3 9.500 8 0 4-4 5-5.500 10h-7c-1.500-5-6-6-6-10 0-5 4-8 9-8z" fill="#8ab53a" stroke="#4d6b1b" /><path d="M15 20c3 0 4 2 4 4-3 0-4-2-4-4zM27.500 20c-3 0-4 2-4 4 3 0 4-2 4-4z" fill="#3e5518" />
  </Svg>
);
const Spiral = () => (
  <Svg w={30} h={30}>
    <rect width="30" height="30" rx="1.500" fill="#3b3f4a" />
    <path d="M8 28.500C1 17 7 7 16 7c8 0 11.500 5.500 11.500 10.500S23.500 26 19 26s-6.500-3-6.500-5.500 2-4.500 4.500-4 3 2.500 1.500 4" stroke="#f5284f" strokeWidth="4.500" /><path d="M8.500 14c2-5 8-7 13-3.500" stroke="#ff9aa9" strokeWidth="1.300" />
    <path d="M0 0h12v10H0z" fill="#f4f4f4" /><text x="6" y="8" textAnchor="middle" fontSize="8" fontWeight="700" fill="#222" fontFamily="Open Sans">64</text>
  </Svg>
);
const Green = () => (
  <Svg w={30} h={30}>
    <circle cx="15" cy="15" r="15" fill="#4db860" /><path d="M7.500 12 20 9l-3 13.500z" stroke="#fff" strokeWidth="1.600" />
    <circle cx="7.500" cy="12" r="2" fill="#fff" /><circle cx="20" cy="9" r="2" fill="#fff" /><circle cx="17" cy="22" r="1.800" fill="#fff" />
  </Svg>
);
const Steam = () => (
  <Svg w={28} h={28}>
    <defs><linearGradient id="st" x1="0" y1="0" x2="0" y2="1"><stop stopColor="#111d2e" /><stop offset=".5" stopColor="#0c2f62" /><stop offset="1" stopColor="#1f8cc4" /></linearGradient></defs>
    <circle cx="14" cy="14" r="14" fill="url(#st)" /><path d="M0 14.500 8.500 18 14 11l7 5-8 5.500c-.5 4-6 4.500-7.500.5L.5 19.500z" fill="#fff" />
    <circle cx="19" cy="10.500" r="5.300" fill="#fff" /><circle cx="19" cy="10.500" r="3.400" fill="#fff" stroke="#17385f" strokeWidth="1.300" /><circle cx="9" cy="20" r="2.300" stroke="#17385f" />
  </Svg>
);

const apps: [React.ReactNode, "none" | "open" | "active"][] = [
  [<Edge />, "open"],
  [<Folder />, "open"],
  [<Store />, "none"],
  [<Mail />, "none"],
  [<Office />, "none"],
  [<Xbox />, "open"],
  [<Teams />, "open"],
  [<Discord />, "open"],
  [<Code />, "open"],
  [<Tile letter="W" base="#185abd" dark="#103f91" cols={["#41a5ee", "#2b7cd3", "#185abd"]} />, "active"],
  [<VBox />, "open"],
  [<Chrome />, "open"],
  [<Spiral />, "open"],
  [<Tile letter="N" base="#7719aa" dark="#7719aa" cols={["#ca64ea", "#ae4bd5", "#9332bf"]} />, "open"],
  [<Green />, "open"],
  [<Steam />, "open"],
];

const TaskBar = () => (
  <div className="flex h-[50px] shrink-0 items-center bg-[#1d1d1d] whitespace-nowrap text-white">
    <Slot className="w-[60px]">
      <Svg w={20} h={20}><path d="M0 3 8.500 1.800v7.700H0zM9.500 1.600 20 0v9.500H9.500zM0 10.500h8.500v7.700L0 17zM9.500 10.500H20V20L9.500 18.400z" fill="#fff" /></Svg>
    </Slot>
    <div className="flex h-[50px] w-[430px] items-center border border-[#5c5c5c] bg-[#333]">
      <Svg w={20} h={21} className="ml-[14px]"><circle cx="13" cy="7.500" r="6.500" stroke="#eee" strokeWidth="1.400" /><path d="m8.500 12.500-8 8" stroke="#eee" strokeWidth="1.500" /></Svg>
      <span className="ml-[15px] text-[19px] tracking-[-0.025em] text-[#d0d0d0]">Skriv her for å søke</span>
    </div>
    <Slot className="w-[60px]"><Svg w={20} h={20}><circle cx="10" cy="10" r="8.300" stroke="#fff" strokeWidth="2.500" /></Svg></Slot>
    <Slot className="w-[60px]">
      <Svg w={20} h={20}><path d="M1 0v3.500h11V0M1 6.500h11v8H1zM1 20v-3h11v3M18.500 0v5M18.500 10v10" stroke="#fff" strokeWidth="1.300" /><path d="M17 6h3v3h-3z" fill="#fff" /></Svg>
    </Slot>
    <div className="ml-[3px] flex h-full">
      {apps.map(([icon, state], i) => (
        <div key={i} className={`relative flex h-full w-[55px] items-center justify-center ${state === "active" ? "bg-[linear-gradient(90deg,transparent_1px,#4a4a4a_1px)]" : ""}`}>
          {icon}
          {state !== "none" && <div className={`absolute bottom-0 h-[3px] bg-[#76b9ed] ${state === "active" ? "left-px w-[54px]" : "left-[6px] w-[44px]"}`} />}
        </div>
      ))}
    </div>
    <div className="ml-auto flex h-full items-center">
      <Svg w={26} h={25}>
        <circle cx="8" cy="8" r="7.500" fill="#f9b931" /><path d="M6 19a5 5 0 0 1 0-10c1-5 9-6 11-1 5-1 9 2 9 6s-3 6-6 6z" fill="#dcecfb" /><path d="M9 15c-3 5-2.500 7 0 7s3-2 0-7zM18 14c-4 6-3 9 0 9s4-3 0-9z" fill="#2f86dd" />
      </Svg>
      <span className="ml-[13px] w-[58px] text-[18px] tracking-[-0.04em]">12°C</span>
      <Svg w={16} h={10}><path d="m1 9 7-7.500L15 9" stroke="#fff" strokeWidth="1.500" /></Svg>
      <Svg w={20} h={14} className="ml-[12px]"><path d="M4 13a4 4 0 0 1-.5-7.800C5 0 12-1 14 4c4 0 6 2.500 6 4.800S18 13 16 13z" fill="#aaa" /><path d="M4 13c-4-1-3-6 1-6.500 4-1 6 0 8 1.500 3 0 6 3 5.500 4l-2 1z" fill="#f2f2f2" /></Svg>
      <Svg w={20} h={15} className="ml-[11px]"><path d="M6 4h12v9H5V9M18 6.500h1.500v4H18M1 1v2M4 1v2M0 3h5v3L3.500 7.500h-2L0 6zM2.500 7.500V13H8" stroke="#fff" strokeWidth="1.200" /></Svg>
      <Svg w={20} h={17} className="ml-[10px]"><path d="M6 2h13.300v9.500H4V7M11.500 11.500V16M7 16h9M.6 1h4.500v4H.6zM2.800 5v3" stroke="#fff" strokeWidth="1.200" /></Svg>
      <Svg w={19} h={14} className="ml-[10px]"><path d="M.6 4.500h3L7.500 1v12L3.600 9.500h-3zM11 4l7 6.500M18 4l-7 6.500" stroke="#fff" strokeWidth="1.200" /></Svg>
      <div className="ml-[13px] flex w-[72px] flex-col items-center text-[15.500px] leading-[23px] tracking-[-0.045em]">
        <span>11:02</span>
        <span>04.10.2021</span>
      </div>
      <div className="relative ml-[23px] h-[22px] w-[45px]">
        <Svg w={20} h={20}><path d="M0 0h20v16h-7l-4 4v-4H0z" fill="#fff" /><path d="M3 4.500h14M3 8h14M3 11.500h9" stroke="#1d1d1d" strokeWidth="1.300" /></Svg>
        <div className="absolute top-[8px] left-[9px] flex size-[22px] items-center justify-center rounded-full border border-[#8a8a8a] bg-[#2e2e2e] text-[14px] tracking-[-0.06em]">16</div>
      </div>
      <div className="mr-[5px] h-full w-px bg-[#6a6a6a]" />
    </div>
  </div>
);

export default function App() {
  return (
    <div className="flex h-[1080px] w-[1920px] flex-col overflow-hidden bg-[#f3f2f1] font-['Open_Sans',sans-serif] text-[#444]">
      <TitleBar />
      <Tabs />
      <Ribbon />
      <Document />
      <StatusBar />
      <TaskBar />
    </div>
  );
}
